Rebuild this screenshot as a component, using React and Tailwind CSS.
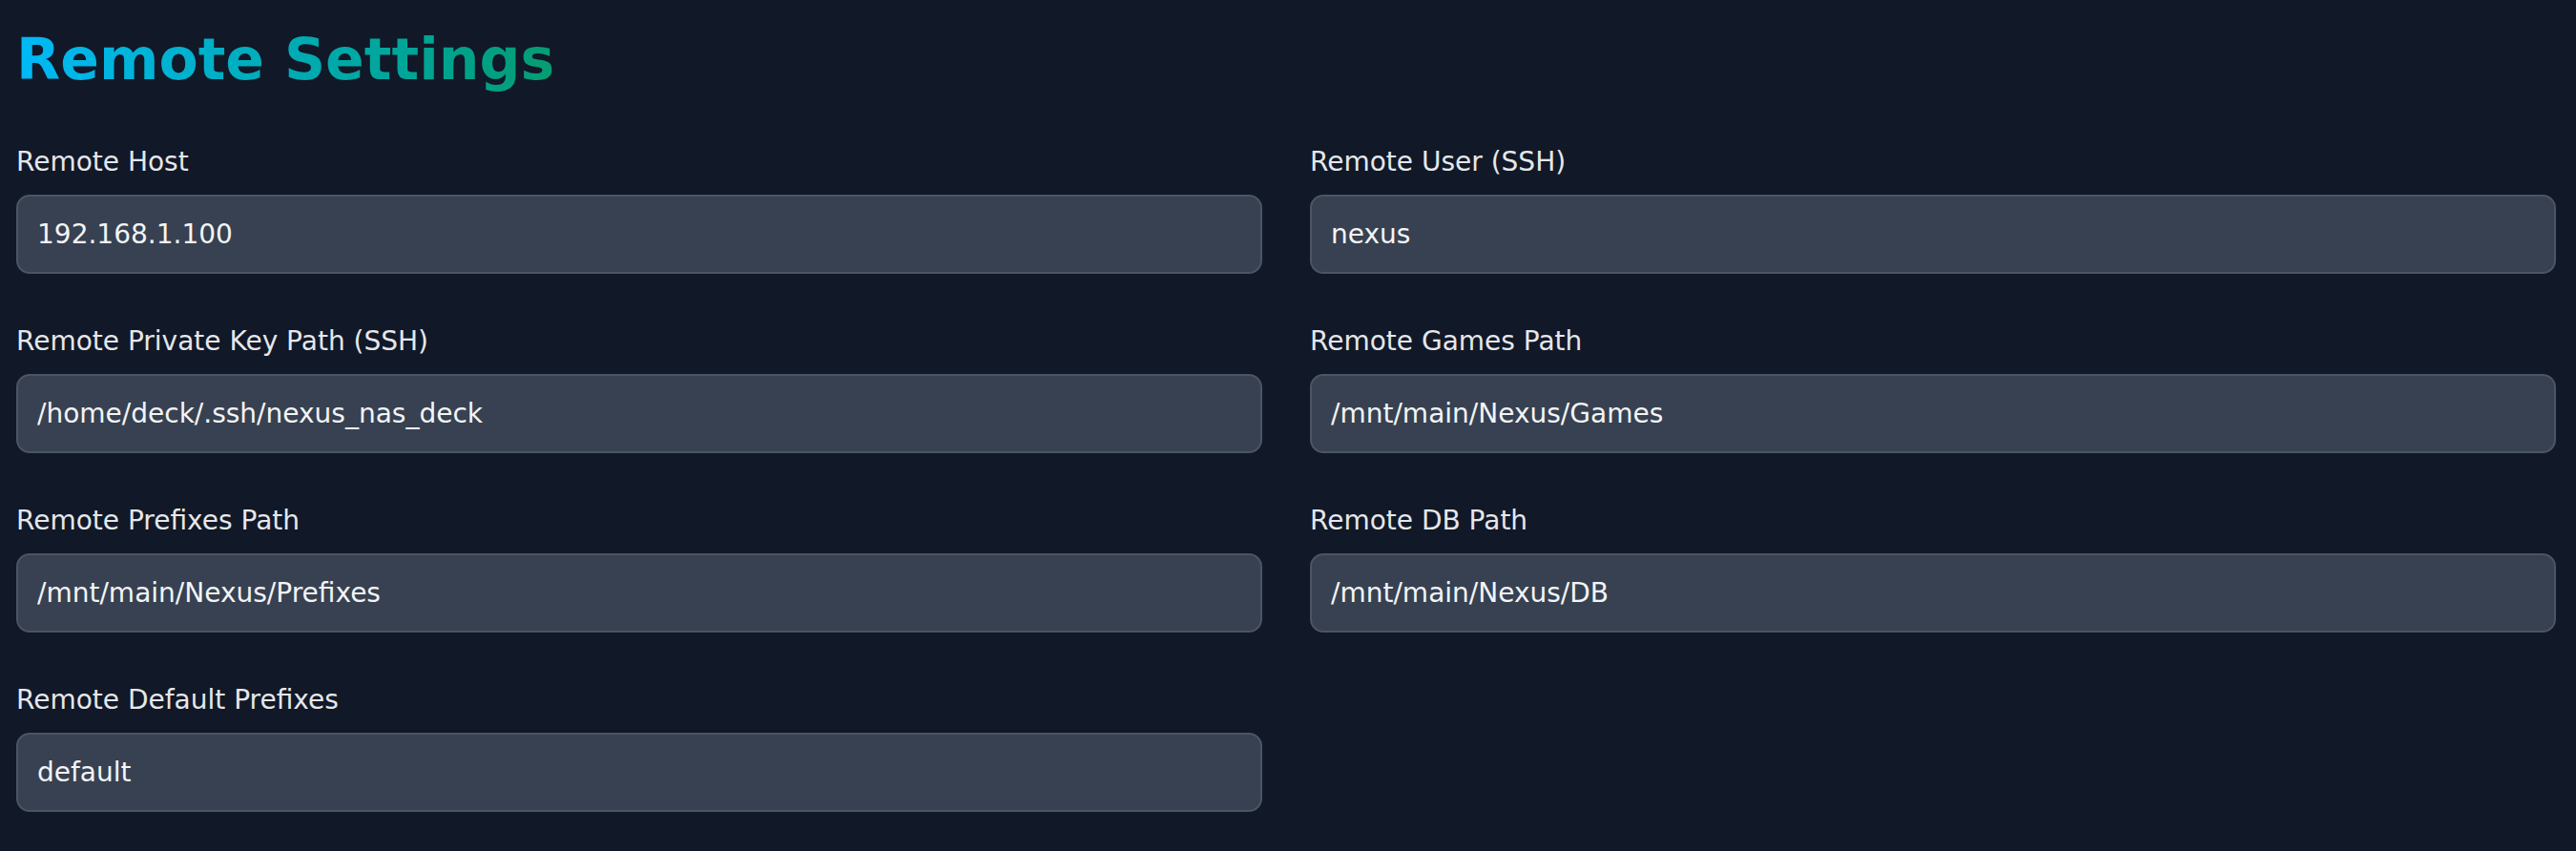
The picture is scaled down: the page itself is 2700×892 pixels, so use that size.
import React from 'react'

const fields = [
  { label: 'Remote Host', value: '192.168.1.100' },
  { label: 'Remote User (SSH)', value: 'nexus' },
  { label: 'Remote Private Key Path (SSH)', value: '/home/deck/.ssh/nexus_nas_deck' },
  { label: 'Remote Games Path', value: '/mnt/main/Nexus/Games' },
  { label: 'Remote Prefixes Path', value: '/mnt/main/Nexus/Prefixes' },
  { label: 'Remote DB Path', value: '/mnt/main/Nexus/DB' },
  { label: 'Remote Default Prefixes', value: 'default' },
]

const Field = ({ label, value }) => {
  return (
    <div className="flex flex-col">
      <label className="mb-[14px] text-[28px] leading-[41px] text-gray-200">{label}</label>
      <input
        type="text"
        defaultValue={value}
        className="h-[83px] w-full rounded-[14px] border-2 border-[#4b5563] bg-[#374151] px-[20px] text-[28px] text-gray-100 outline-none"
      />
    </div>
  )
}

export default function App() {
  return (
    <div className="min-h-screen bg-[#111827] pl-[17px] pr-[21px] pt-[27px] pb-[38px] font-['DejaVu_Sans',sans-serif]">
      <h1 className="mb-[51px] inline-block bg-gradient-to-r from-[#00b9f7] to-[#079c72] bg-clip-text text-[60px] font-bold leading-[71px] text-transparent">
        Remote Settings
      </h1>
      <div className="grid grid-cols-2 gap-x-[50px] gap-y-[50px]">
        {fields.map((f) => (
          <Field key={f.label} label={f.label} value={f.value} />
        ))}
      </div>
    </div>
  )
}
